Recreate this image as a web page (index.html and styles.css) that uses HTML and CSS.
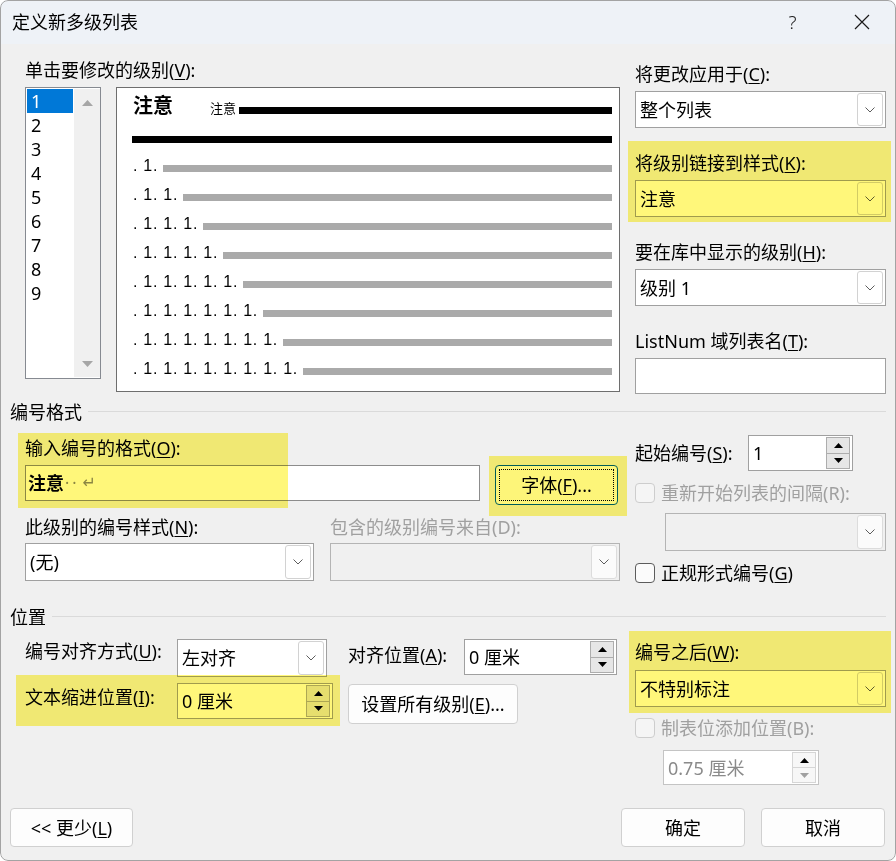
FILE: index.html
```html
<!DOCTYPE html>
<html lang="zh-CN">
<head>
    <meta charset="UTF-8">
    <title>定义新多级列表</title>
    <link rel="stylesheet" href="styles.css">
</head>
<body>
    <div class="dialog">
        <div class="titlebar">
            <span class="title">定义新多级列表</span>
            <div class="tb-btns">
                <span class="tb-btn help">?</span>
                <span class="tb-btn close">
                    <svg width="16" height="16" viewBox="0 0 16 16"><path d="M1 1 L15 15 M15 1 L1 15" stroke="#1a1a1a" stroke-width="1.2" fill="none"/></svg>
                </span>
            </div>
        </div>

        <div class="content">
            <!-- levels + preview + right options -->
            <div class="top">
                <div class="levels">
                    <div class="label">单击要修改的级别(<u>V</u>):</div>
                    <div class="levels-row">
                        <div class="listbox">
                            <ul class="level-list">
                                <li class="sel">1</li>
                                <li>2</li>
                                <li>3</li>
                                <li>4</li>
                                <li>5</li>
                                <li>6</li>
                                <li>7</li>
                                <li>8</li>
                                <li>9</li>
                            </ul>
                            <div class="vscroll">
                                <svg width="11" height="6" viewBox="0 0 11 6"><polygon points="0,6 5.5,0 11,6" fill="#a6a6a6"/></svg>
                                <svg width="11" height="6" viewBox="0 0 11 6"><polygon points="0,0 5.5,6 11,0" fill="#a6a6a6"/></svg>
                            </div>
                        </div>
                        <div class="preview">
                            <div class="pv-row">
                                <span class="pv-big">注意</span>
                                <span class="pv-small">注意</span>
                                <i class="bar black"></i>
                            </div>
                            <div class="pv-row"><i class="bar black wide"></i></div>
                            <div class="pv-row"><span class="pv-num">. 1.</span><i class="bar"></i></div>
                            <div class="pv-row"><span class="pv-num">. 1. 1.</span><i class="bar"></i></div>
                            <div class="pv-row"><span class="pv-num">. 1. 1. 1.</span><i class="bar"></i></div>
                            <div class="pv-row"><span class="pv-num">. 1. 1. 1. 1.</span><i class="bar"></i></div>
                            <div class="pv-row"><span class="pv-num">. 1. 1. 1. 1. 1.</span><i class="bar"></i></div>
                            <div class="pv-row"><span class="pv-num">. 1. 1. 1. 1. 1. 1.</span><i class="bar"></i></div>
                            <div class="pv-row"><span class="pv-num">. 1. 1. 1. 1. 1. 1. 1.</span><i class="bar"></i></div>
                            <div class="pv-row"><span class="pv-num">. 1. 1. 1. 1. 1. 1. 1. 1.</span><i class="bar"></i></div>
                        </div>
                    </div>
                </div>

                <div class="side">
                    <div class="field">
                        <div class="label">将更改应用于(<u>C</u>):</div>
                        <div class="combo">
                            <span class="combo-val">整个列表</span>
                            <span class="drop"><svg width="10" height="6" viewBox="0 0 10 6"><polyline points="0.5,0.5 5,5 9.5,0.5" fill="none" stroke="#5d5d5d" stroke-width="1"/></svg></span>
                        </div>
                    </div>
                    <div class="field">
                        <div class="label">将级别链接到样式(<u>K</u>):</div>
                        <div class="combo">
                            <span class="combo-val">注意</span>
                            <span class="drop"><svg width="10" height="6" viewBox="0 0 10 6"><polyline points="0.5,0.5 5,5 9.5,0.5" fill="none" stroke="#5d5d5d" stroke-width="1"/></svg></span>
                        </div>
                    </div>
                    <div class="field">
                        <div class="label">要在库中显示的级别(<u>H</u>):</div>
                        <div class="combo">
                            <span class="combo-val">级别 1</span>
                            <span class="drop"><svg width="10" height="6" viewBox="0 0 10 6"><polyline points="0.5,0.5 5,5 9.5,0.5" fill="none" stroke="#5d5d5d" stroke-width="1"/></svg></span>
                        </div>
                    </div>
                    <div class="field">
                        <div class="label">ListNum 域列表名(<u>T</u>):</div>
                        <div class="textbox"></div>
                    </div>
                </div>
            </div>

            <!-- 编号格式 -->
            <div class="group-head"><span>编号格式</span><i class="rule"></i></div>
            <div class="format">
                <div class="format-left">
                    <div class="label">输入编号的格式(<u>O</u>):</div>
                    <div class="fmt-row">
                        <div class="fmt-input"><b>注意</b><span class="marks">··</span><span class="ret">↵</span></div>
                        <button class="btn default"><span class="focus-ring">字体(<u>F</u>)...</span></button>
                    </div>
                    <div class="pair">
                        <div class="field-n">
                            <div class="label">此级别的编号样式(<u>N</u>):</div>
                            <div class="combo tall">
                                <span class="combo-val">(无)</span>
                                <span class="drop"><svg width="10" height="6" viewBox="0 0 10 6"><polyline points="0.5,0.5 5,5 9.5,0.5" fill="none" stroke="#5d5d5d" stroke-width="1"/></svg></span>
                            </div>
                        </div>
                        <div class="field-d">
                            <div class="label disabled">包含的级别编号来自(D):</div>
                            <div class="combo tall off">
                                <span class="combo-val"></span>
                                <span class="drop"><svg width="10" height="6" viewBox="0 0 10 6"><polyline points="0.5,0.5 5,5 9.5,0.5" fill="none" stroke="#5d5d5d" stroke-width="1"/></svg></span>
                            </div>
                        </div>
                    </div>
                </div>

                <div class="format-right">
                    <div class="spin-row">
                        <span class="spin-label">起始编号(<u>S</u>):</span>
                        <div class="spin start">
                            <span class="spin-val">1</span>
                            <div class="spin-btns">
                                <span class="sb"><svg width="9" height="5" viewBox="0 0 9 5"><polygon points="0,5 4.5,0 9,5" fill="#000"/></svg></span>
                                <span class="sb"><svg width="9" height="5" viewBox="0 0 9 5"><polygon points="0,0 4.5,5 9,0" fill="#000"/></svg></span>
                            </div>
                        </div>
                    </div>
                    <div class="check-row">
                        <span class="check off"></span>
                        <span class="disabled">重新开始列表的间隔(R):</span>
                    </div>
                    <div class="combo tall off restart">
                        <span class="combo-val"></span>
                        <span class="drop"><svg width="10" height="6" viewBox="0 0 10 6"><polyline points="0.5,0.5 5,5 9.5,0.5" fill="none" stroke="#5d5d5d" stroke-width="1"/></svg></span>
                    </div>
                    <div class="check-row">
                        <span class="check"></span>
                        <span>正规形式编号(<u>G</u>)</span>
                    </div>
                </div>
            </div>

            <!-- 位置 -->
            <div class="group-head pos-head"><span>位置</span><i class="rule"></i></div>
            <div class="position">
                <div class="pos-grid">
                    <span class="label">编号对齐方式(<u>U</u>):</span>
                    <div class="combo tall align">
                        <span class="combo-val">左对齐</span>
                        <span class="drop"><svg width="10" height="6" viewBox="0 0 10 6"><polyline points="0.5,0.5 5,5 9.5,0.5" fill="none" stroke="#5d5d5d" stroke-width="1"/></svg></span>
                    </div>
                    <span class="label at-label">对齐位置(<u>A</u>):</span>
                    <div class="spin">
                        <span class="spin-val">0 厘米</span>
                        <div class="spin-btns">
                            <span class="sb"><svg width="9" height="5" viewBox="0 0 9 5"><polygon points="0,5 4.5,0 9,5" fill="#000"/></svg></span>
                            <span class="sb"><svg width="9" height="5" viewBox="0 0 9 5"><polygon points="0,0 4.5,5 9,0" fill="#000"/></svg></span>
                        </div>
                    </div>

                    <span class="label indent-label">文本缩进位置(<u>I</u>):</span>
                    <div class="spin">
                        <span class="spin-val">0 厘米</span>
                        <div class="spin-btns">
                            <span class="sb"><svg width="9" height="5" viewBox="0 0 9 5"><polygon points="0,5 4.5,0 9,5" fill="#000"/></svg></span>
                            <span class="sb"><svg width="9" height="5" viewBox="0 0 9 5"><polygon points="0,0 4.5,5 9,0" fill="#000"/></svg></span>
                        </div>
                    </div>
                    <button class="btn all-levels">设置所有级别(<u>E</u>)...</button>
                </div>

                <div class="pos-right">
                    <div class="label">编号之后(<u>W</u>):</div>
                    <div class="combo after">
                        <span class="combo-val">不特别标注</span>
                        <span class="drop"><svg width="10" height="6" viewBox="0 0 10 6"><polyline points="0.5,0.5 5,5 9.5,0.5" fill="none" stroke="#5d5d5d" stroke-width="1"/></svg></span>
                    </div>
                    <div class="check-row tab-row">
                        <span class="check off"></span>
                        <span class="disabled">制表位添加位置(B):</span>
                    </div>
                    <div class="spin off tab-spin">
                        <span class="spin-val">0.75 厘米</span>
                        <div class="spin-btns">
                            <span class="sb"><svg width="9" height="5" viewBox="0 0 9 5"><polygon points="0,5 4.5,0 9,5" fill="#000"/></svg></span>
                            <span class="sb"><svg width="9" height="5" viewBox="0 0 9 5"><polygon points="0,0 4.5,5 9,0" fill="#a0a0a0"/></svg></span>
                        </div>
                    </div>
                </div>
            </div>

            <div class="footer">
                <button class="btn foot">&lt;&lt; 更少(<u>L</u>)</button>
                <div class="foot-right">
                    <button class="btn foot">确定</button>
                    <button class="btn foot">取消</button>
                </div>
            </div>
        </div>

        <!-- highlighter marks laid over the dialog -->
        <div class="hl hl-link"></div>
        <div class="hl hl-format"></div>
        <div class="hl hl-font"></div>
        <div class="hl hl-indent"></div>
        <div class="hl hl-after"></div>
    </div>
</body>
</html>
```

FILE: styles.css
```css
* {
    box-sizing: border-box;
}

html, body {
    margin: 0;
    background: #fff;
}

body {
    font-family: "Noto Sans", "Noto Sans CJK SC", sans-serif;
    font-size: 18px;
    line-height: 24px;
    color: #000;
}

u {
    text-underline-offset: 2px;
    text-decoration-thickness: 1px;
}

.dialog {
    position: relative;
    width: 896px;
    height: 861px;
    background: #f0f0f0;
    border-radius: 8px;
    overflow: hidden;
}

.dialog::after {
    content: '';
    position: absolute;
    inset: 0;
    border: 1px solid #a3a3a3;
    border-radius: 8px;
    pointer-events: none;
}

/* title bar */
.titlebar {
    height: 44px;
    background: #eef2f7;
    display: flex;
    align-items: center;
    padding-left: 12px;
}

.title {
    flex: 1;
}

.tb-btns {
    display: flex;
}

.tb-btn {
    width: 69px;
    height: 44px;
    display: flex;
    align-items: center;
    justify-content: center;
    color: #1a1a1a;
}

.help {
    font-size: 19px;
    font-weight: 300;
}

.content {
    padding: 0 10px;
}

.label {
    line-height: 24px;
    white-space: nowrap;
}

.disabled {
    color: #a0a0a0;
}

/* top area */
.top {
    display: flex;
    padding-top: 14px;
}

.levels {
    margin-left: 15px;
    width: 595px;
}

.levels-row {
    display: flex;
    gap: 15px;
    margin-top: 5px;
}

.listbox {
    width: 76px;
    height: 292px;
    border: 1px solid #868a91;
    background: #fff;
    padding: 1px 0 1px 1px;
    display: flex;
}

.level-list {
    list-style: none;
    margin: 0;
    padding: 0;
    width: 46px;
}

.level-list li {
    height: 24px;
    line-height: 24px;
    padding-left: 4px;
}

.level-list li.sel {
    background: #0078d7;
    color: #fff;
}

.vscroll {
    width: 26px;
    margin-left: 1px;
    background: #f0f0f0;
    display: flex;
    flex-direction: column;
    align-items: center;
    justify-content: space-between;
    padding: 11px 0 10px;
}

.preview {
    width: 504px;
    height: 305px;
    border: 1px solid #6e6e6e;
    background: #fff;
    padding: 8px 7px 0 16px;
}

.pv-row {
    height: 29px;
    display: flex;
    align-items: center;
}

.bar {
    flex: 1;
    height: 7px;
    background: #aaa;
}

.bar.black {
    background: #000;
}

.bar.wide {
    margin-left: -1px;
}

.pv-big {
    font-size: 20px;
    line-height: 20px;
    font-weight: bold;
    margin-bottom: 9px;
}

.pv-small {
    font-size: 13px;
    line-height: 14px;
    margin: 0 3px 6px 37px;
}

.pv-num {
    font-family: "Liberation Sans", Arial, sans-serif;
    font-size: 16px;
    line-height: 16px;
    letter-spacing: 0.73px;
    white-space: pre;
    margin: 0 5px 6px 0;
}

/* right column */
.side {
    margin-left: 15px;
    width: 251px;
    padding-top: 4px;
}

.field {
    margin-bottom: 23px;
}

.field:last-child {
    margin-bottom: 0;
}

.field .combo,
.field .textbox {
    margin-top: 5px;
}

.combo {
    display: flex;
    height: 37px;
    border: 1px solid #a0a0a0;
    background: #fff;
}

.combo.tall {
    height: 38px;
}

.combo-val {
    flex: 1;
    padding-left: 4px;
    display: flex;
    align-items: center;
    white-space: nowrap;
}

.drop {
    width: 26px;
    margin: 1px 2px 1px 0;
    border: 1px solid #d2d2d2;
    border-radius: 3px;
    background: #fff;
    display: flex;
    align-items: center;
    justify-content: center;
}

.combo.off {
    background: #f0f0f0;
    border-color: #b4b4b4;
}

.combo.off .drop {
    background: #fbfbfb;
    border-color: #dcdcdc;
}

.textbox {
    height: 36px;
    border: 1px solid #a0a0a0;
    background: #fff;
}

/* section headers */
.group-head {
    display: flex;
    align-items: center;
    margin-top: 6px;
    line-height: 24px;
}

.rule {
    flex: 1;
    height: 1px;
    background: #dadada;
    margin-left: 6px;
    margin-top: -1px;
}

.pos-head {
    margin-top: 20px;
}

/* number format */
.format {
    display: flex;
}

.format-left {
    margin-left: 15px;
    width: 595px;
    padding-top: 12px;
}

.fmt-row {
    display: flex;
    gap: 15px;
    align-items: flex-start;
    margin-top: 5px;
}

.fmt-input {
    width: 455px;
    height: 36px;
    border: 1px solid #8c8c8c;
    background: #fff;
    display: flex;
    align-items: center;
    padding-left: 2px;
}

.marks {
    color: #8a8a8a;
    font-size: 16px;
    letter-spacing: 3px;
    margin-left: 1px;
}

.ret {
    color: #8a8a8a;
    font-family: "DejaVu Sans", sans-serif;
    font-size: 16px;
    margin-left: 3px;
}

.btn {
    font-family: inherit;
    font-size: 18px;
    line-height: 24px;
    color: #000;
    background: #fdfdfd;
    border: 1px solid #d0d0d0;
    border-radius: 4px;
    padding: 0;
}

.btn.default {
    width: 123px;
    height: 40px;
    border-color: #005fb8;
    padding: 3px;
}

.focus-ring {
    display: flex;
    align-items: center;
    justify-content: center;
    height: 100%;
    border: 1px dotted #000;
}

.pair {
    display: flex;
    gap: 16px;
    margin-top: 10px;
}

.field-n {
    width: 289px;
}

.field-d {
    width: 290px;
}

.pair .combo {
    margin-top: 4px;
}

.format-right {
    margin-left: 15px;
    width: 251px;
    padding-top: 11px;
}

.spin-row {
    display: flex;
    align-items: center;
}

.spin-label {
    width: 113px;
    white-space: nowrap;
}

.spin {
    display: flex;
    height: 36px;
    border: 1px solid #a0a0a0;
    background: #fff;
}

.spin.start {
    width: 105px;
}

.spin-val {
    flex: 1;
    padding-left: 4px;
    display: flex;
    align-items: center;
    white-space: nowrap;
}

.spin-btns {
    width: 24px;
    margin: 1px 2px 1px 0;
    display: flex;
    flex-direction: column;
}

.sb {
    flex: 1;
    background: #e6e6e6;
    border: 1px solid #adadad;
    display: flex;
    align-items: center;
    justify-content: center;
}

.sb + .sb {
    margin-top: -1px;
}

.check-row {
    display: flex;
    align-items: center;
    height: 24px;
    margin-top: 10px;
    white-space: nowrap;
}

.check {
    width: 20px;
    height: 20px;
    border: 1px solid #5c5c5c;
    border-radius: 4px;
    background: #fbfbfb;
    margin-right: 6px;
}

.check.off {
    border-color: #cdcdcd;
    background: #f5f5f5;
}

.restart {
    width: 221px;
    margin: 8px 0 0 30px;
}

/* position */
.position {
    display: flex;
    padding-top: 10px;
}

.pos-grid {
    margin-left: 15px;
    width: 595px;
    display: grid;
    grid-template-columns: 152px 156px 15px 116px 153px;
    grid-template-rows: 38px 41px;
    row-gap: 6px;
}

.pos-grid .label {
    grid-column: 1;
    align-self: start;
}

.pos-grid .align {
    width: 150px;
}

.pos-grid .at-label {
    grid-column: 4;
    margin-top: 4px;
}

.pos-grid .indent-label {
    grid-column: 1;
    margin-top: 2px;
}

.pos-grid .spin {
    align-self: start;
}

.all-levels {
    grid-column: 4 / 6;
    justify-self: start;
    width: 170px;
    height: 40px;
    margin-top: 1px;
}

.pos-right {
    margin-left: 15px;
    width: 251px;
    padding-top: 1px;
}

.after {
    margin-top: 6px;
}

.tab-row {
    margin-top: 9px;
}

.tab-spin {
    width: 156px;
    height: 35px;
    margin: 10px 0 0 28px;
    border-color: #c4c4c4;
    color: #8a8a8a;
}

.tab-spin .sb {
    background: #f7f7f7;
    border-color: #d6d6d6;
}

/* footer */
.footer {
    display: flex;
    margin-top: 23px;
    padding-right: 1px;
}

.foot {
    width: 123px;
    height: 39px;
}

.foot-right {
    margin-left: auto;
    display: flex;
    gap: 16px;
}

.foot-right .foot {
    width: 124px;
}

/* yellow highlighter */
.hl {
    position: absolute;
    background: #fff77a;
    mix-blend-mode: multiply;
    pointer-events: none;
}

.hl-link {
    left: 628px;
    top: 141px;
    width: 263px;
    height: 81px;
}

.hl-format {
    left: 18px;
    top: 433px;
    width: 270px;
    height: 75px;
}

.hl-font {
    left: 489px;
    top: 456px;
    width: 138px;
    height: 60px;
}

.hl-indent {
    left: 16px;
    top: 675px;
    width: 324px;
    height: 51px;
}

.hl-after {
    left: 629px;
    top: 631px;
    width: 262px;
    height: 82px;
}
```
